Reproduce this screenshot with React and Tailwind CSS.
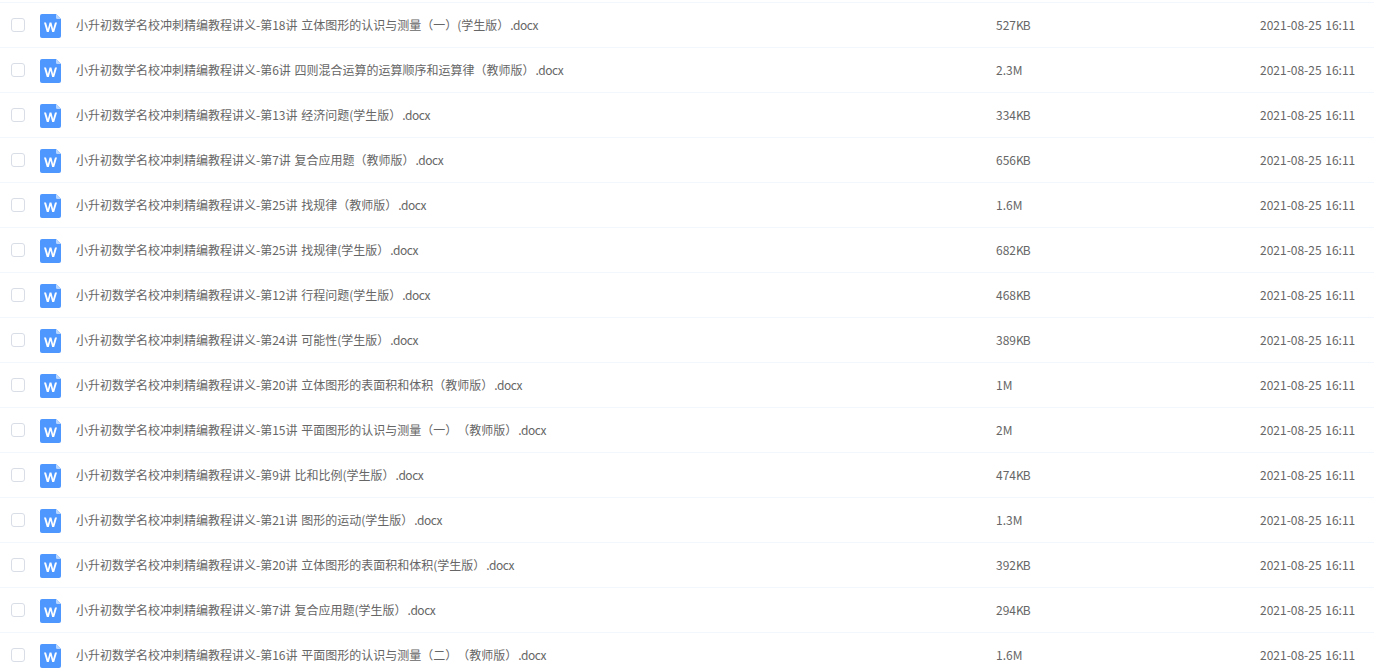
import React from 'react';

const rows = [
  ['第18讲 立体图形的认识与测量（一）(学生版）', '527', 'KB'],
  ['第6讲 四则混合运算的运算顺序和运算律（教师版）', '2.3M', ''],
  ['第13讲 经济问题(学生版）', '334', 'KB'],
  ['第7讲 复合应用题（教师版）', '656', 'KB'],
  ['第25讲 找规律（教师版）', '1.6M', ''],
  ['第25讲 找规律(学生版）', '682', 'KB'],
  ['第12讲 行程问题(学生版）', '468', 'KB'],
  ['第24讲 可能性(学生版）', '389', 'KB'],
  ['第20讲 立体图形的表面积和体积（教师版）', '1M', ''],
  ['第15讲 平面图形的认识与测量（一）（教师版）', '2M', ''],
  ['第9讲 比和比例(学生版）', '474', 'KB'],
  ['第21讲 图形的运动(学生版）', '1.3M', ''],
  ['第20讲 立体图形的表面积和体积(学生版）', '392', 'KB'],
  ['第7讲 复合应用题(学生版）', '294', 'KB'],
  ['第16讲 平面图形的认识与测量（二）（教师版）', '1.6M', ''],
];

function WordIcon() {
  return (
    <svg width="21" height="24" viewBox="0 0 21 24" className="shrink-0">
      <path d="M2 0H16L21 5V22a2 2 0 0 1-2 2H2a2 2 0 0 1-2-2V2a2 2 0 0 1 2-2Z" fill="#4d97ff" />
      <path d="M16 0L21 5H17.2A1.2 1.2 0 0 1 16 3.8Z" fill="#b5d4ff" />
      <path d="M4 8.5H6L7.9 15L9.6 8.5H11.4L13.1 15L15 8.5H17L14.2 18H12.2L10.5 11.8L8.8 18H6.8Z" fill="#fff" />
    </svg>
  );
}

function Row({ name, num, unit }) {
  return (
    <div className="flex h-[45px] shrink-0 items-center border-b border-[#f2f6fd] text-xs text-[#666] [word-spacing:1px] [text-spacing-trim:space-all]">
      <div className="ml-[11px] h-[14px] w-[14px] shrink-0 rounded-[3px] border border-[#d8dde6] bg-white" />
      <div className="ml-[15px] mt-[1px]"><WordIcon /></div>
      <div className="ml-[15px] w-[920px] shrink-0 whitespace-nowrap">
        小升初数学名校冲刺精编教程讲义-{name}
        <span className="ml-[1px] tracking-[-0.5px]">.docx</span>
      </div>
      <div className="w-[264px] shrink-0">
        {num}
        <span className="tracking-[-1px]">{unit}</span>
      </div>
      <div className="whitespace-nowrap">2021-08-25 16:11</div>
    </div>
  );
}

export default function App() {
  return (
    <div className="flex h-[672px] w-full flex-col overflow-hidden bg-white font-['Noto_Sans_CJK_SC','Noto_Sans',sans-serif]">
      <div className="h-[3px] shrink-0 border-b border-[#f2f6fd]" />
      {rows.map((r, i) => (
        <Row key={i} name={r[0]} num={r[1]} unit={r[2]} />
      ))}
    </div>
  );
}
